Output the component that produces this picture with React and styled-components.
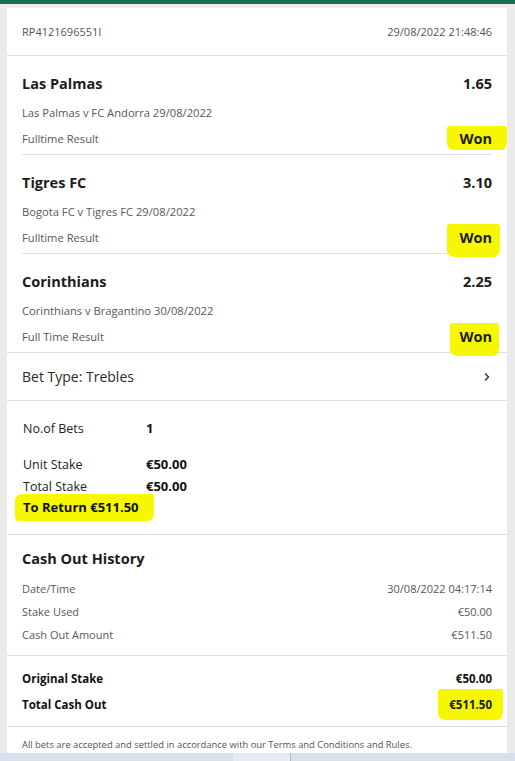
import React from "react";
import styled, { createGlobalStyle } from "styled-components";

const Global = createGlobalStyle`
  html, body { margin: 0; padding: 0; background: #ebebeb; }
  body { font-family: "Open Sans", "Noto Sans", sans-serif; color: #1f1f1f; }
`;

const Page = styled.div`
  width: 515px;
  height: 761px;
  background: #ebebeb;
  display: flex;
  flex-direction: column;
  overflow: hidden;
`;

const TopBar = styled.div`
  height: 4px;
  background: #17704e;
  flex: none;
`;

const Card = styled.div`
  margin: 4px 8px 0 7px;
  background: #fff;
  flex: 1;
  display: flex;
  flex-direction: column;
`;

const Section = styled.div`
  border-bottom: ${p => (p.$noBorder ? "none" : "1px solid #dedede")};
  padding: ${p => p.$pad || "0 15px"};
`;

const HeaderRow = styled.div`
  height: 47px;
  display: flex;
  align-items: center;
  justify-content: space-between;
  font-size: 11px;
  color: #555;
`;

const Selection = styled.div`
  padding: 15px 0 3px;
  border-bottom: ${p => (p.$last ? "none" : "1px solid #e0e0e0")};
`;

const TitleRow = styled.div`
  display: flex;
  justify-content: space-between;
  align-items: center;
  font-size: 14.5px;
  font-weight: 700;
  color: #1c1c1c;
  height: 24px;
  margin-bottom: 4px;
`;

const SubRow = styled.div`
  display: flex;
  justify-content: space-between;
  align-items: center;
  font-size: 11.2px;
  color: #575757;
  height: 26px;
`;

const Won = styled.span`
  position: relative;
  font-size: ${p => p.$size || 14.5}px;
  font-weight: 700;
  color: #1c1c1c;
  z-index: 0;
  &::before {
    content: "";
    position: absolute;
    z-index: -1;
    left: ${p => p.$l}px;
    right: ${p => p.$r}px;
    top: ${p => p.$t}px;
    bottom: ${p => p.$b}px;
    background: #f7f700;
    border-radius: 3px 2px 6px 8px / 3px 4px 8px 6px;
  }
`;

const BetType = styled.div`
  height: 47px;
  display: flex;
  align-items: center;
  justify-content: space-between;
  font-size: 14px;
  color: #2a2a2a;
`;

const Summary = styled.div`
  padding: 16px 0 16px 1px;
  display: grid;
  grid-template-columns: 123px auto;
  font-size: 12.5px;
  color: #222;
`;

const SumLabel = styled.div`
  height: 22px;
  display: flex;
  align-items: center;
  margin-top: ${p => p.$gap || 0}px;
`;

const SumValue = styled(SumLabel)`
  font-weight: 700;
  font-size: 13px;
  color: #111;
`;

const ReturnLine = styled.div`
  grid-column: 1 / -1;
  height: 22px;
  display: flex;
  align-items: center;
  margin-top: -1px;
`;

const Marker = styled.span`
  font-weight: 700;
  font-size: 13px;
  color: #111;
  background: #f7f700;
  padding: 4px 15px 5px 8px;
  margin-left: -8px;
  border-radius: 8px 2px 6px 3px / 6px 2px 8px 5px;
`;

const HistTitle = styled.div`
  font-size: 14.5px;
  font-weight: 700;
  color: #1c1c1c;
  padding-top: 11px;
  height: 24px;
  display: flex;
  align-items: center;
  margin-bottom: 7px;
`;

const InfoRow = styled.div`
  display: flex;
  justify-content: space-between;
  align-items: center;
  height: 23px;
  font-size: 11px;
  color: #575757;
`;

const TotalRow = styled.div`
  display: flex;
  justify-content: space-between;
  align-items: center;
  height: 26px;
  font-size: 11.5px;
  font-weight: 700;
  color: #111;
`;

const Footer = styled.div`
  font-size: 9.4px;
  color: #555;
  padding: 11px 15px 0;
`;

const BottomBar = styled.div`
  height: 8px;
  flex: none;
  display: grid;
  grid-template-columns: 233px 57px 1fr;
  background: #d8e0ec;
`;

const BottomSeg = styled.div`
  background: ${p => p.$bg};
  border-left: ${p => (p.$line ? "1px solid #a9b4c4" : "none")};
`;

const Chevron = () => (
  <svg width="8" height="10" viewBox="0 0 8 10" style={{ marginRight: 1 }}>
    <path d="M2 1.5 L5.5 5 L2 8.5" fill="none" stroke="#333" strokeWidth="1.4" />
  </svg>
);

const selections = [
  { team: "Las Palmas", odds: "1.65", event: "Las Palmas v FC Andorra 29/08/2022", market: "Fulltime Result", hl: { l: -12, r: -15, t: -3, b: -2 } },
  { team: "Tigres FC", odds: "3.10", event: "Bogota FC v Tigres FC 29/08/2022", market: "Fulltime Result", hl: { l: -12, r: -8, t: -4, b: -10 } },
  { team: "Corinthians", odds: "2.25", event: "Corinthians v Bragantino 30/08/2022", market: "Full Time Result", hl: { l: -9, r: -7, t: -4, b: -10 } },
];

export default function App() {
  return (
    <Page>
      <Global />
      <TopBar />
      <Card>
        <Section>
          <HeaderRow>
            <span>RP4121696551I</span>
            <span>29/08/2022 21:48:46</span>
          </HeaderRow>
        </Section>
        <Section>
          {selections.map((s, i) => (
            <Selection key={s.team} $last={i === selections.length - 1}>
              <TitleRow>
                <span>{s.team}</span>
                <span>{s.odds}</span>
              </TitleRow>
              <SubRow>
                <span>{s.event}</span>
              </SubRow>
              <SubRow>
                <span>{s.market}</span>
                <Won $l={s.hl.l} $r={s.hl.r} $t={s.hl.t} $b={s.hl.b}>Won</Won>
              </SubRow>
            </Selection>
          ))}
        </Section>
        <Section>
          <BetType>
            <span>Bet Type: Trebles</span>
            <Chevron />
          </BetType>
        </Section>
        <Section>
          <Summary>
            <SumLabel>No.of Bets</SumLabel>
            <SumValue>1</SumValue>
            <SumLabel $gap={14}>Unit Stake</SumLabel>
            <SumValue $gap={14}>€50.00</SumValue>
            <SumLabel>Total Stake</SumLabel>
            <SumValue>€50.00</SumValue>
            <ReturnLine>
              <Marker>To Return €511.50</Marker>
            </ReturnLine>
          </Summary>
        </Section>
        <Section $pad="0 15px 9px">
          <HistTitle>Cash Out History</HistTitle>
          <InfoRow>
            <span>Date/Time</span>
            <span>30/08/2022 04:17:14</span>
          </InfoRow>
          <InfoRow>
            <span>Stake Used</span>
            <span>€50.00</span>
          </InfoRow>
          <InfoRow>
            <span>Cash Out Amount</span>
            <span>€511.50</span>
          </InfoRow>
        </Section>
        <Section $pad="9px 15px 9px">
          <TotalRow>
            <span>Original Stake</span>
            <span>€50.00</span>
          </TotalRow>
          <TotalRow>
            <span>Total Cash Out</span>
            <Won $size={11.5} $l={-11} $r={-11} $t={-8} $b={-8}>€511.50</Won>
          </TotalRow>
        </Section>
        <Footer>All bets are accepted and settled in accordance with our Terms and Conditions and Rules.</Footer>
      </Card>
      <BottomBar>
        <BottomSeg $bg="#d8e0ec" />
        <BottomSeg $bg="#e6ebf3" />
        <BottomSeg $bg="#d8e0ec" $line />
      </BottomBar>
    </Page>
  );
}
